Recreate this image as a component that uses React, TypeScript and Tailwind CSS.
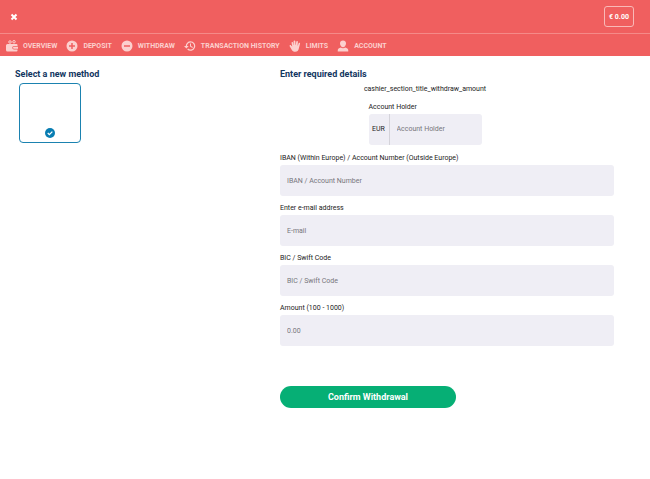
import type { ReactNode } from 'react';

type NavItem = {
  label: string;
  icon: ReactNode;
};

type Field = {
  id: string;
  label: string;
  placeholder: string;
};

const WalletIcon = () => (
  <svg viewBox="0 0 24 24" className="size-3 shrink-0" fill="currentColor" aria-hidden="true">
    <circle cx="8" cy="4" r="2.500" fill="none" stroke="currentColor" strokeWidth="2" />
    <circle cx="16" cy="3.500" r="2.500" fill="none" stroke="currentColor" strokeWidth="2" />
    <path d="M3 8h18a2 2 0 0 1 2 2v2h-7a3.500 3.500 0 0 0 0 7h7v2a2 2 0 0 1-2 2H3a3 3 0 0 1-3-3v-9a3 3 0 0 1 3-3z" />
    <path d="M16 13.500h8v4h-8a2 2 0 0 1 0-4z" />
  </svg>
);

const PlusIcon = () => (
  <svg viewBox="0 0 24 24" className="size-3 shrink-0" fill="currentColor" aria-hidden="true">
    <path
      fillRule="evenodd"
      d="M12 1a11 11 0 1 1 0 22 11 11 0 0 1 0-22zm-1.500 5v4.500H6v3h4.500V18h3v-4.500H18v-3h-4.500V6z"
    />
  </svg>
);

const MinusIcon = () => (
  <svg viewBox="0 0 24 24" className="size-3 shrink-0" fill="currentColor" aria-hidden="true">
    <path fillRule="evenodd" d="M12 1a11 11 0 1 1 0 22 11 11 0 0 1 0-22zM6 10.500v3h12v-3z" />
  </svg>
);

const HistoryIcon = () => (
  <svg viewBox="0 0 24 24" className="size-3 shrink-0" fill="currentColor" aria-hidden="true">
    <path d="M13 2.500a9.500 9.500 0 0 0-9.500 9.500H0l4.700 5L9.500 12H6a7 7 0 1 1 2.200 5.100L6.500 19A9.500 9.500 0 1 0 13 2.500zM12 7v6l4.800 2.800 1-1.700-3.800-2.200V7z" />
  </svg>
);

const HandIcon = () => (
  <svg viewBox="0 0 24 24" className="size-3 shrink-0" fill="currentColor" aria-hidden="true">
    <path d="M5 5.500c0-2.200 3-2.200 3.300 0L9 10h.5L9.200 2.500c0-2.200 3.400-2.200 3.500 0L13 10h.5l1-6.500c.4-2.200 3.500-1.700 3.300.4L17.200 11h.6l1.400-4.500c.7-2 3.300-1.300 2.900.8l-2.600 10.200c-.7 3.500-3 6-7 6-3.500 0-5.500-1.400-6.800-3.700L1.300 12.700c-1-2 1.500-3.500 2.900-1.900L6.500 13z" />
  </svg>
);

const UserIcon = () => (
  <svg viewBox="0 0 24 24" className="size-3 shrink-0" fill="currentColor" aria-hidden="true">
    <path d="M12 1c3.800 0 6 2.500 6 6s-2.500 7.500-6 7.500S6 10.500 6 7s2.200-6 6-6z" />
    <path d="M1.500 23v-2.500c0-3 2.500-4.500 6-5.500 2.500 2 6.500 2 9 0 3.500 1 6 2.500 6 5.500V23z" />
  </svg>
);

const navItems: NavItem[] = [
  { label: 'Overview', icon: <WalletIcon /> },
  { label: 'Deposit', icon: <PlusIcon /> },
  { label: 'Withdraw', icon: <MinusIcon /> },
  { label: 'Transaction history', icon: <HistoryIcon /> },
  { label: 'Limits', icon: <HandIcon /> },
  { label: 'Account', icon: <UserIcon /> },
];

const fields: Field[] = [
  {
    id: 'iban',
    label: 'IBAN (Within Europe) / Account Number (Outside Europe)',
    placeholder: 'IBAN / Account Number',
  },
  { id: 'email', label: 'Enter e-mail address', placeholder: 'E-mail' },
  { id: 'bic', label: 'BIC / Swift Code', placeholder: 'BIC / Swift Code' },
  { id: 'amount', label: 'Amount (100 - 1000)', placeholder: '0.00' },
];

function Header() {
  return (
    <header className="bg-[#f05f5f] text-white">
      <div className="flex h-[34px] items-center justify-between border-b border-[#f58a88] pl-2.5 pr-4">
        <button type="button" aria-label="Close" className="flex size-2 items-center justify-center">
          <svg viewBox="0 0 8 8" className="size-2" stroke="currentColor" strokeWidth="2" aria-hidden="true">
            <path d="M1.500 1.500l5 5M6.500 1.500l-5 5" />
          </svg>
        </button>
        <button
          type="button"
          className="flex h-[21px] w-[30px] items-center justify-center whitespace-nowrap rounded-[3px] border border-[#f9b9b7] text-[7px] font-bold leading-2.5"
        >
          € 0.00
        </button>
      </div>
      <nav className="flex h-[22px] items-center gap-[9px] pl-1.5 pt-px text-[#fcd0ce]">
        {navItems.map((item) => (
          <a
            key={item.label}
            href="#"
            className="flex items-center gap-[5px] whitespace-nowrap text-[7px] font-bold uppercase leading-2.5"
          >
            {item.icon}
            {item.label}
          </a>
        ))}
      </nav>
    </header>
  );
}

function PaymentMethods() {
  return (
    <section className="w-[265px] shrink-0">
      <h2 className="text-[9px] font-bold leading-3 text-[#12365f]">Select a new method</h2>
      <button
        type="button"
        aria-label="Bank transfer"
        aria-pressed="true"
        className="ml-1 mt-[3px] flex h-[60px] w-[62px] items-end justify-center rounded border border-[#1b82b0] pb-1"
      >
        <svg viewBox="0 0 20 20" className="size-2.5" aria-hidden="true">
          <circle cx="10" cy="10" r="10" fill="#087db2" />
          <path d="M5.500 10l3.200 3.200 6-6" fill="none" stroke="white" strokeWidth="2.600" />
        </svg>
      </button>
    </section>
  );
}

function WithdrawForm() {
  return (
    <section className="min-w-0 flex-1">
      <h2 className="text-[9px] font-bold leading-3 text-[#12365f]">Enter required details</h2>
      <form>
        <div className="flex flex-col items-center pr-11">
          <p className="mt-1 text-[7px] leading-2.5">cashier_section_title_withdraw_amount</p>
          <div className="mt-2 w-[113px]">
            <label htmlFor="holder" className="block text-[7px] leading-2.5">
              Account Holder
            </label>
            <div className="mt-0.5 flex h-[31px] overflow-hidden rounded-[3px] bg-[#efeef5] text-[7px]">
              <span className="flex w-[21px] shrink-0 items-center justify-center border-r border-[#d4d3da]">
                EUR
              </span>
              <input
                id="holder"
                type="text"
                placeholder="Account Holder"
                className="min-w-0 flex-1 px-[7px] outline-none placeholder:text-[#77767c]"
              />
            </div>
          </div>
        </div>
        <div className="mt-2 flex flex-col gap-[7px]">
          {fields.map((field) => (
            <div key={field.id}>
              <label htmlFor={field.id} className="block text-[7px] leading-2.5">
                {field.label}
              </label>
              <input
                id={field.id}
                type="text"
                placeholder={field.placeholder}
                className="mt-0.5 block h-[31px] w-full rounded-[3px] bg-[#efeef5] px-[7px] text-[7px] outline-none placeholder:text-[#77767c]"
              />
            </div>
          ))}
        </div>
        <button
          type="submit"
          className="mt-10 h-[22px] w-44 rounded-full bg-[#06af75] text-[9px] font-bold leading-3 text-white"
        >
          Confirm Withdrawal
        </button>
      </form>
    </section>
  );
}

export default function App() {
  return (
    <div className="min-h-screen bg-white font-['Roboto',sans-serif] text-[#222222]">
      <Header />
      <main className="flex pb-4 pl-[15px] pr-9 pt-3">
        <PaymentMethods />
        <WithdrawForm />
      </main>
    </div>
  );
}
